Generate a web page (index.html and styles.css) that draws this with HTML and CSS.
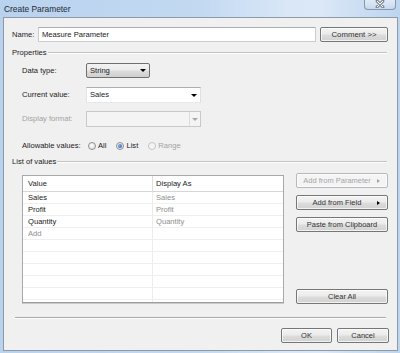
FILE: index.html
```html
<!DOCTYPE html>
<html lang="en">
<head>
	<title>Create Parameter</title>
	<meta charset="utf-8">
	<link rel="stylesheet" href="styles.css">
</head>
<body>
	<div class="window">
		<div class="titlebar">
			<span class="title">Create Parameter</span>
			<span class="close-btn">
				<svg width="10" height="8" viewBox="0 0 10 8"><path d="M2 1 L8 7 M8 1 L2 7" stroke="#3b4a5c" stroke-width="2.6" stroke-linecap="round"/><path d="M2 1 L8 7 M8 1 L2 7" stroke="#ffffff" stroke-width="1.2" stroke-linecap="round"/></svg>
			</span>
		</div>

		<div class="dialog">
			<div class="name-row">
				<span class="name-label">Name:</span>
				<div class="textbox">Measure Parameter</div>
				<button class="btn comment-btn">Comment &gt;&gt;</button>
			</div>

			<div class="group-title"><span>Properties</span></div>
			<div class="props">
				<div class="prop-row row-type">
					<span class="prop-label">Data type:</span>
					<div class="combo combo-btn">String<i class="arrow"></i></div>
				</div>
				<div class="prop-row row-current">
					<span class="prop-label">Current value:</span>
					<div class="combo combo-edit">Sales<i class="arrow"></i></div>
				</div>
				<div class="prop-row row-format">
					<span class="prop-label disabled">Display format:</span>
					<div class="combo combo-disabled"><span class="drop"><i class="arrow"></i></span></div>
				</div>
				<div class="prop-row row-allow">
					<span class="prop-label">Allowable values:</span>
					<label class="radio"><i class="dot"></i>All</label>
					<label class="radio checked"><i class="dot"></i>List</label>
					<label class="radio disabled"><i class="dot"></i>Range</label>
				</div>
			</div>

			<div class="group-title"><span>List of values</span></div>
			<div class="values">
				<div class="grid">
					<div class="grid-row grid-head"><span class="c1">Value</span><span class="c2">Display As</span></div>
					<div class="grid-row"><span class="c1">Sales</span><span class="c2 muted">Sales</span></div>
					<div class="grid-row"><span class="c1">Profit</span><span class="c2 muted">Profit</span></div>
					<div class="grid-row"><span class="c1">Quantity</span><span class="c2 muted">Quantity</span></div>
					<div class="grid-row"><span class="c1 muted">Add</span><span class="c2"></span></div>
					<div class="grid-row"><span class="c1"></span><span class="c2"></span></div>
					<div class="grid-row"><span class="c1"></span><span class="c2"></span></div>
					<div class="grid-row"><span class="c1"></span><span class="c2"></span></div>
					<div class="grid-row"><span class="c1"></span><span class="c2"></span></div>
					<div class="grid-row"><span class="c1"></span><span class="c2"></span></div>
					<div class="grid-row"><span class="c1"></span><span class="c2"></span></div>
				</div>
				<div class="side-buttons">
					<button class="btn side-btn btn-disabled"><span>Add from Parameter</span><i class="tri"></i></button>
					<button class="btn side-btn"><span>Add from Field</span><i class="tri"></i></button>
					<button class="btn side-btn"><span>Paste from Clipboard</span></button>
					<button class="btn side-btn clear-btn"><span>Clear All</span></button>
				</div>
			</div>

			<div class="separator"></div>

			<div class="footer">
				<button class="btn ok-btn">OK</button>
				<button class="btn cancel-btn">Cancel</button>
			</div>
		</div>
	</div>
</body>
</html>
```

FILE: styles.css
```css
*{
	margin: 0;
	padding: 0;
	box-sizing: border-box;
}

html, body{
	width: 400px;
	height: 353px;
	overflow: hidden;
}
body{
	font-family: "Liberation Sans", Arial, sans-serif;
	font-size: 7.6px;
	line-height: 1;
	color: #1b1b1b;
	background: #bcd4ee;
}

.window{
	width: 400px;
	height: 353px;
	background: linear-gradient(90deg, #b9d2ee 0%, #c3d9f2 50%, #d9e7f7 72%, #dbe8f7 80%, #c4d9f1 95%, #bed5ef 100%);
}

.titlebar{
	height: 17px;
	display: flex;
	align-items: flex-start;
}
.title{
	font-size: 8.4px;
	color: #1e2a38;
	margin: 5px 0 0 4px;
	flex: 1;
}
.close-btn{
	width: 32px;
	height: 11px;
	margin-right: 4px;
	margin-top: -1px;
	border: 1px solid #8397b0;
	border-top: none;
	border-radius: 0 0 4px 4px;
	background: linear-gradient(#e3ecf7, #c7d9ee);
	display: flex;
	align-items: center;
	justify-content: center;
}

.dialog{
	height: 334px;
	margin: 0 2px 0 3px;
	border: 1px solid #8e9aa8;
	background: #f0f0f0;
	padding: 9px 9px 0 8px;
}

/* name row */
.name-row{
	display: flex;
	align-items: center;
	height: 15px;
}
.name-label{
	width: 26px;
}
.textbox{
	width: 278px;
	height: 15px;
	background: #fff;
	border: 1px solid #c9ccd1;
	border-top-color: #abadb3;
	padding: 0 3px;
	display: flex;
	align-items: center;
}

.btn{
	font-family: "Liberation Sans", Arial, sans-serif;
	font-size: 7.5px;
	font-weight: normal;
	white-space: nowrap;
	color: #333;
	height: 15px;
	border: 1px solid #767676;
	border-radius: 2px;
	background: linear-gradient(#f3f3f3 0%, #ebebeb 48%, #dcdcdc 52%, #d2d2d2 100%);
	box-shadow: inset 0 0 0 1px rgba(255,255,255,0.7);
	display: flex;
	align-items: center;
	justify-content: center;
}
.comment-btn{
	width: 68px;
	margin-left: 4px;
	font-size: 7.8px;
}

/* group titles */
.group-title{
	display: flex;
	align-items: center;
	height: 10px;
	margin-top: 6px;
	margin-right: 1px;
}
.group-title::after{
	content: "";
	flex: 1;
	margin-left: 1px;
	border-top: 1px solid #c4c4c4;
	border-bottom: 1px solid #fff;
}

/* properties */
.props{
	padding-left: 10px;
	margin-top: 5px;
}
.prop-row{
	display: flex;
	align-items: center;
}
.row-type{ height: 15px; }
.row-current{ height: 16px; margin-top: 9px; }
.row-format{ height: 16px; margin-top: 8px; }
.row-allow{ height: 10px; margin-top: 14px; }

.prop-label{
	width: 64px;
}
.disabled{
	color: #a3a3a3;
}

.combo{
	height: 100%;
	display: flex;
	align-items: center;
	padding-left: 3px;
}
.arrow{
	display: block;
	width: 0;
	height: 0;
	border-left: 3px solid transparent;
	border-right: 3px solid transparent;
	border-top: 3px solid #000;
	margin-left: auto;
}
.combo-btn{
	width: 64px;
	border: 1px solid #707070;
	border-radius: 2px;
	background: linear-gradient(#f2f2f2 0%, #ebebeb 48%, #dddddd 52%, #cfcfcf 100%);
	padding-right: 3px;
}
.combo-edit{
	width: 115px;
	background: #fff;
	border: 1px solid #abadb3;
	border-color: #abadb3 #dbdfe6 #e3e9ef #e2e3ea;
	padding-right: 3px;
}
.combo-disabled{
	width: 115px;
	background: #f4f4f4;
	border: 1px solid #c9c9c9;
	padding: 0;
	justify-content: flex-end;
}
.combo-disabled .drop{
	width: 11px;
	height: 100%;
	border-left: 1px solid #dcdcdc;
	display: flex;
	align-items: center;
	justify-content: center;
}
.combo-disabled .arrow{
	margin: 0;
	border-top-color: #a8a8a8;
}

.radio{
	display: flex;
	align-items: center;
	margin-left: 2px;
	margin-right: 8px;
}
.radio .dot{
	width: 8px;
	height: 8px;
	border: 1px solid #8f8f8f;
	border-radius: 50%;
	background: radial-gradient(circle at 40% 40%, #fbfbfb, #dcdcdc);
	margin-right: 2px;
	display: flex;
	align-items: center;
	justify-content: center;
}
.radio.checked .dot::after{
	content: "";
	width: 4px;
	height: 4px;
	border-radius: 50%;
	background: radial-gradient(circle at 35% 35%, #7fb0e8, #1d4f9c);
}
.radio.disabled{
	color: #a3a3a3;
}
.radio.disabled .dot{
	border-color: #c6c6c6;
	background: #f4f4f4;
}

/* list of values */
.values{
	display: flex;
	align-items: flex-start;
	margin-top: 6px;
	height: 130px;
}
.grid{
	width: 262px;
	height: 128px;
	margin: 2px 0 0 10px;
	background: #fff;
	border: 1px solid #a5a8ad;
	border-bottom-color: #9d9d9d;
	box-shadow: 0 1px 0 #c9c9c9;
	overflow: hidden;
}
.grid-row{
	display: flex;
	height: 12px;
	border-bottom: 1px solid #efefef;
}
.grid-head{
	height: 16px;
	border-bottom: 1px solid #d6d6d6;
}
.grid-row span{
	display: flex;
	align-items: center;
	padding-left: 5px;
}
.c1{
	width: 130px;
	border-right: 1px solid #ececec;
}
.grid-head .c1{
	border-right-color: #dedede;
}
.c2{
	flex: 1;
	padding-left: 3px !important;
}
.muted{
	color: #8e8e8e;
}

.side-buttons{
	width: 92px;
	margin-left: 12px;
	display: flex;
	flex-direction: column;
}
.side-btn{
	width: 92px;
	height: 15px;
	margin-bottom: 7px;
	padding: 0 3px;
}
.side-btn span{
	flex: 1;
	text-align: center;
}
.tri{
	display: block;
	width: 0;
	height: 0;
	border-top: 2.5px solid transparent;
	border-bottom: 2.5px solid transparent;
	border-left: 3px solid #000;
	margin: 0 4px 0 3px;
}
.btn-disabled{
	color: #a6a6a6;
	border-color: #b5b9bd;
	background: #f4f4f4;
}
.btn-disabled .tri{
	border-left-color: #a6a6a6;
}
.clear-btn{
	margin-top: 50px;
}

.separator{
	margin: 14px 2px 0 3px;
	border-top: 1px solid #a9a9a9;
	border-bottom: 1px solid #fff;
}

.footer{
	display: flex;
	justify-content: flex-end;
	margin-top: 9px;
	margin-right: -1px;
}
.ok-btn{
	width: 51px;
}
.cancel-btn{
	width: 52px;
	margin-left: 5px;
}
```
